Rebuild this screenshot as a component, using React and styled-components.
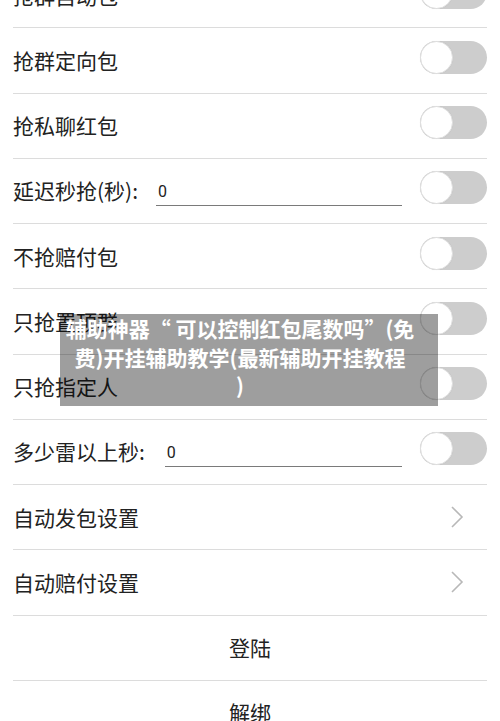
import React from "react";
import styled, { createGlobalStyle } from "styled-components";

const GlobalStyle = createGlobalStyle`
  html, body {
    margin: 0;
    padding: 0;
    background: #fff;
  }
  body {
    font-family: "Noto Sans CJK SC", "Noto Sans", sans-serif;
    color: #222;
  }
`;

const Page = styled.div`
  position: relative;
  width: 500px;
  height: 721px;
  overflow: hidden;
  background: #fff;
`;

const List = styled.div`
  margin-top: -37px;
  display: flex;
  flex-direction: column;
`;

const Row = styled.div`
  box-sizing: border-box;
  height: 65.25px;
  margin: 0 13px;
  border-bottom: 1px solid #dcdcdc;
  display: flex;
  align-items: center;
  justify-content: ${(p) => (p.$center ? "center" : "flex-start")};
`;

const Label = styled.span`
  font-size: 21px;
  line-height: 1;
  color: #222;
  white-space: nowrap;
`;

const Spacer = styled.div`
  flex: 1;
`;

const NumberInput = styled.input`
  flex: 1;
  box-sizing: border-box;
  height: 28px;
  margin: 2px 18px 0 ${(p) => p.$gap}px;
  padding: 0 2px;
  border: none;
  border-bottom: 1.5px solid #7a7a7a;
  outline: none;
  background: transparent;
  font-family: "Roboto", "Noto Sans", sans-serif;
  font-size: 16px;
  color: #222;
`;

const Track = styled.div`
  position: relative;
  flex: none;
  width: 67px;
  height: 33px;
  margin-bottom: 6px;
  border-radius: 17px;
  background: #cdcdcd;
`;

const Knob = styled.div`
  position: absolute;
  left: 0;
  top: 0;
  box-sizing: border-box;
  width: 33px;
  height: 33px;
  border-radius: 50%;
  background: #fff;
  border: 1px solid #e0e0e0;
  box-shadow: 0 0 1px rgba(0, 0, 0, 0.08);
`;

const Chevron = styled.svg`
  flex: none;
  width: 14px;
  height: 24px;
  margin-right: 23px;
`;

const Overlay = styled.div`
  position: absolute;
  left: 60px;
  top: 314px;
  box-sizing: border-box;
  width: 378px;
  height: 92px;
  padding: 0 18px 6px 0;
  background: rgba(0, 0, 0, 0.38);
  display: flex;
  flex-direction: column;
  align-items: center;
`;

const OverlayLine = styled.div`
  font-size: 21px;
  font-weight: 700;
  line-height: 28.5px;
  color: #fff;
  white-space: nowrap;
`;

const Toggle = () => (
  <Track>
    <Knob />
  </Track>
);

const ToggleRow = ({ label }) => (
  <Row>
    <Label>{label}</Label>
    <Spacer />
    <Toggle />
  </Row>
);

const InputRow = ({ label, gap }) => (
  <Row>
    <Label>{label}</Label>
    <NumberInput $gap={gap} defaultValue="0" />
    <Toggle />
  </Row>
);

const LinkRow = ({ label }) => (
  <Row>
    <Label>{label}</Label>
    <Spacer />
    <Chevron viewBox="0 0 14 24">
      <path d="M2 2 L12 12 L2 22" fill="none" stroke="#b8b8b8" strokeWidth="1.6" />
    </Chevron>
  </Row>
);

export default function App() {
  return (
    <Page>
      <GlobalStyle />
      <List>
        <ToggleRow label="抢群自动包" />
        <ToggleRow label="抢群定向包" />
        <ToggleRow label="抢私聊红包" />
        <InputRow label="延迟秒抢(秒):" gap={18} />
        <ToggleRow label="不抢赔付包" />
        <ToggleRow label="只抢置顶群" />
        <ToggleRow label="只抢指定人" />
        <InputRow label="多少雷以上秒:" gap={20} />
        <LinkRow label="自动发包设置" />
        <LinkRow label="自动赔付设置" />
        <Row $center>
          <Label>登陆</Label>
        </Row>
        <Row $center>
          <Label>解绑</Label>
        </Row>
      </List>
      <Overlay>
        <OverlayLine>辅助神器“ 可以控制红包尾数吗”(免</OverlayLine>
        <OverlayLine>费)开挂辅助教学(最新辅助开挂教程</OverlayLine>
        <OverlayLine>)</OverlayLine>
      </Overlay>
    </Page>
  );
}
